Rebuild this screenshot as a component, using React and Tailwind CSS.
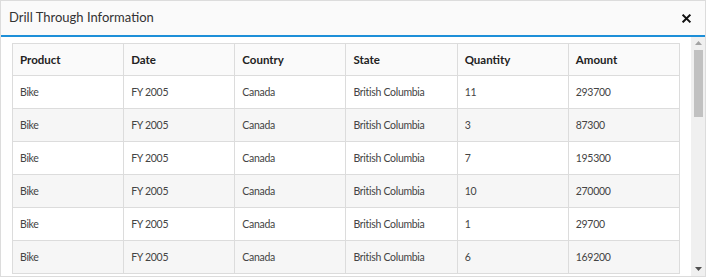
import React from 'react'

const rows = [
  ['Bike', 'FY 2005', 'Canada', 'British Columbia', '11', '293700'],
  ['Bike', 'FY 2005', 'Canada', 'British Columbia', '3', '87300'],
  ['Bike', 'FY 2005', 'Canada', 'British Columbia', '7', '195300'],
  ['Bike', 'FY 2005', 'Canada', 'British Columbia', '10', '270000'],
  ['Bike', 'FY 2005', 'Canada', 'British Columbia', '1', '29700'],
  ['Bike', 'FY 2005', 'Canada', 'British Columbia', '6', '169200'],
]

const headers = ['Product', 'Date', 'Country', 'State', 'Quantity', 'Amount']

export default function App() {
  return (
    <div className="w-[706px] h-[277px] overflow-hidden bg-white border border-[#dcdcdc] flex flex-col text-[#333] font-['Lato',sans-serif]">
      {/* header */}
      <div className="h-[36px] shrink-0 bg-[#fafafa] border-b-2 border-[#1d8fd8] flex items-center justify-between pl-[8px] pr-[14px]">
        <span className="text-[13px] text-[#333]">Drill Through Information</span>
        <svg viewBox="0 0 10 10" width="9" height="9" stroke="#111" strokeWidth="2.2" strokeLinecap="square">
          <path d="M1.5 1.5l7 7M8.5 1.5l-7 7" />
        </svg>
      </div>

      {/* body */}
      <div className="flex-1 flex min-h-0">
        <div className="flex-1 pl-[11px] pt-[6px] pr-[12px] overflow-hidden">
          <table className="w-[668px] table-fixed border-collapse text-[10.5px]">
            <thead>
              <tr className="h-[32px] bg-[#fafafa]">
                {headers.map(h => (
                  <th key={h} className="border border-[#dcdcdc] text-left font-bold text-[11.5px] text-[#222] pl-[7px]">
                    {h}
                  </th>
                ))}
              </tr>
            </thead>
            <tbody>
              {rows.map((r, i) => (
                <tr key={i} className={`h-[33px] ${i % 2 === 1 ? 'bg-[#f6f6f6]' : 'bg-white'}`}>
                  {r.map((c, j) => (
                    <td key={j} className="border border-[#dcdcdc] pl-[7px] pt-[1px] text-[#444] tracking-[-0.3px]">
                      {c}
                    </td>
                  ))}
                </tr>
              ))}
            </tbody>
          </table>
        </div>

        {/* scrollbar */}
        <div className="w-[14px] shrink-0 bg-[#f0f0f0] flex flex-col items-center">
          <div className="h-[12px] flex items-center justify-center">
            <svg width="7" height="4" viewBox="0 0 7 4"><path d="M3.5 0L7 4H0z" fill="#a3a3a3" /></svg>
          </div>
          <div className="w-[9px] h-[67px] bg-[#c1c1c1] mt-[1px]" />
          <div className="flex-1" />
          <div className="h-[14px] flex items-center justify-center">
            <svg width="7" height="4" viewBox="0 0 7 4"><path d="M0 0h7L3.5 4z" fill="#505050" /></svg>
          </div>
        </div>
      </div>
    </div>
  )
}
